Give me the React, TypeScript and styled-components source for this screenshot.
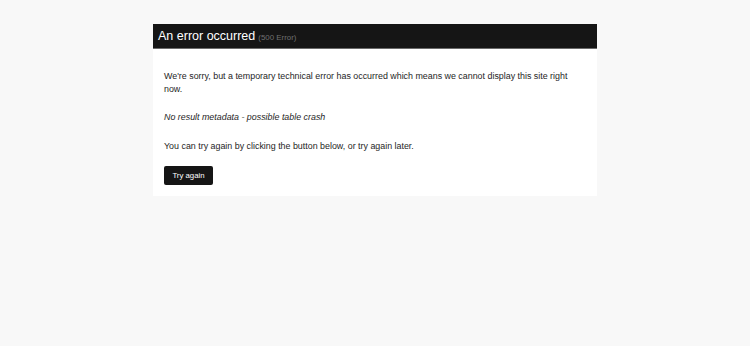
import React from "react";
import styled, { createGlobalStyle } from "styled-components";

const Global = createGlobalStyle`
  html, body { margin: 0; padding: 0; background: #f8f8f8; }
  body { font-family: "Liberation Sans", Arial, sans-serif; color: #1e1e1e; }
`;

const Page = styled.div`
  display: flex;
  justify-content: center;
  padding-top: 24px;
`;

const Card = styled.div`
  width: 444px;
  background: #fff;
`;

const Header = styled.div`
  background: #151515;
  height: 19px;
  padding: 5px 5px 0;
  border-bottom: 1px solid #6a6a6a;
  display: flex;
  align-items: baseline;
  gap: 3px;
`;

const Title = styled.h1`
  margin: 0;
  font-size: 12.5px;
  line-height: 14px;
  font-weight: normal;
  color: #fff;
`;

const Code = styled.span`
  font-size: 7.9px;
  color: #707070;
`;

const Body = styled.div`
  padding: 21px 11px 11px;
`;

const P = styled.p<{ $italic?: boolean; $last?: boolean }>`
  margin: 0 0 ${(p) => (p.$last ? 13.5 : 16)}px;
  font-size: 8.9px;
  line-height: 12.5px;
  font-style: ${(p) => (p.$italic ? "italic" : "normal")};
`;

const Button = styled.button`
  display: block;
  background: #151515;
  color: #fff;
  border: none;
  border-radius: 2px;
  font-family: "Liberation Sans", Arial, sans-serif;
  font-size: 7.8px;
  width: 49px;
  height: 19px;
  padding: 0;
`;

export default function App() {
  return (
    <>
      <Global />
      <Page>
        <Card>
          <Header>
            <Title>An error occurred</Title>
            <Code>(500 Error)</Code>
          </Header>
          <Body>
            <P>
              We're sorry, but a temporary technical error has occurred which
              means we cannot display this site right now.
            </P>
            <P $italic>No result metadata - possible table crash</P>
            <P $last>
              You can try again by clicking the button below, or try again later.
            </P>
            <Button>Try again</Button>
          </Body>
        </Card>
      </Page>
    </>
  );
}
